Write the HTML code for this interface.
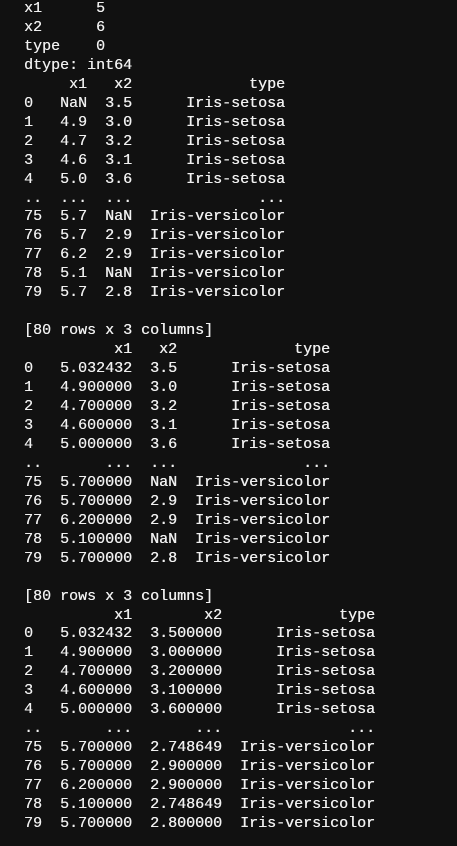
<!DOCTYPE html>
<html><head><meta charset="utf-8"><style>
html,body{margin:0;padding:0;background:#111111;width:457px;height:846px;overflow:hidden}
pre{margin:0;position:absolute;left:24px;top:0px;font-family:"Liberation Mono",monospace;font-size:15px;line-height:18.95px;color:#f0f0f0;white-space:pre;text-shadow:0.3px 0 0 #f0f0f0}
</style></head><body><pre>x1      5
x2      6
type    0
dtype: int64
     x1   x2             type
0   NaN  3.5      Iris-setosa
1   4.9  3.0      Iris-setosa
2   4.7  3.2      Iris-setosa
3   4.6  3.1      Iris-setosa
4   5.0  3.6      Iris-setosa
..  ...  ...              ...
75  5.7  NaN  Iris-versicolor
76  5.7  2.9  Iris-versicolor
77  6.2  2.9  Iris-versicolor
78  5.1  NaN  Iris-versicolor
79  5.7  2.8  Iris-versicolor

[80 rows x 3 columns]
          x1   x2             type
0   5.032432  3.5      Iris-setosa
1   4.900000  3.0      Iris-setosa
2   4.700000  3.2      Iris-setosa
3   4.600000  3.1      Iris-setosa
4   5.000000  3.6      Iris-setosa
..       ...  ...              ...
75  5.700000  NaN  Iris-versicolor
76  5.700000  2.9  Iris-versicolor
77  6.200000  2.9  Iris-versicolor
78  5.100000  NaN  Iris-versicolor
79  5.700000  2.8  Iris-versicolor

[80 rows x 3 columns]
          x1        x2             type
0   5.032432  3.500000      Iris-setosa
1   4.900000  3.000000      Iris-setosa
2   4.700000  3.200000      Iris-setosa
3   4.600000  3.100000      Iris-setosa
4   5.000000  3.600000      Iris-setosa
..       ...       ...              ...
75  5.700000  2.748649  Iris-versicolor
76  5.700000  2.900000  Iris-versicolor
77  6.200000  2.900000  Iris-versicolor
78  5.100000  2.748649  Iris-versicolor
79  5.700000  2.800000  Iris-versicolor</pre></body></html>
